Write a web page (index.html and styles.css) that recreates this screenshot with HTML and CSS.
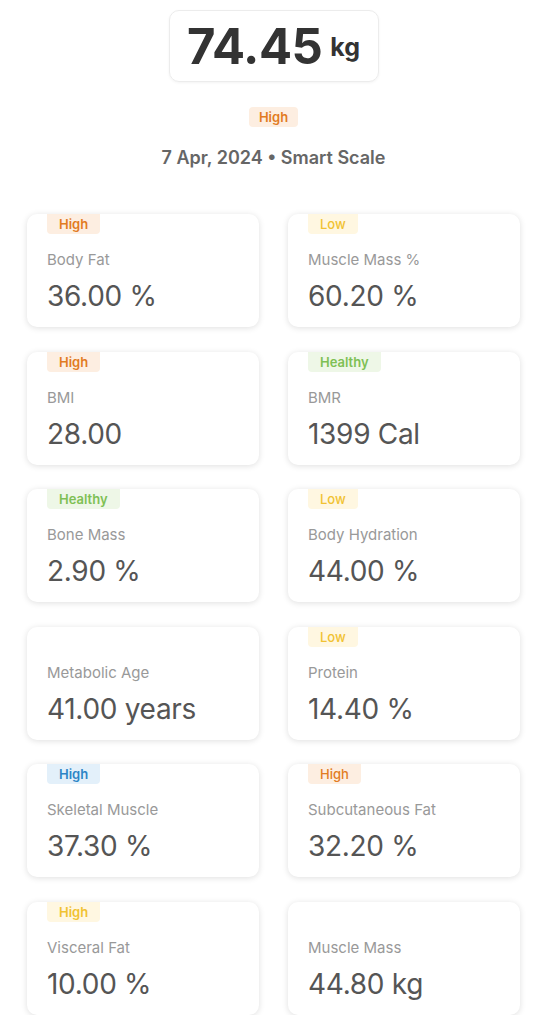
FILE: index.html
```html
<!DOCTYPE html>
<html>
<head>
    <title>Weight Details</title>
    <link rel="stylesheet" href="styles.css">
</head>
<body>
    <div class="summary">
        <div class="weight-box">
            <span class="weight">74.45</span>
            <span class="unit">kg</span>
        </div>
        <span class="tag orange">High</span>
        <div class="meta">7 Apr, 2024 &bull; Smart Scale</div>
    </div>

    <div class="grid">
        <div class="card">
            <span class="tag orange">High</span>
            <div class="label">Body Fat</div>
            <div class="value">36.00 %</div>
        </div>
        <div class="card">
            <span class="tag yellow light">Low</span>
            <div class="label">Muscle Mass %</div>
            <div class="value">60.20 %</div>
        </div>
        <div class="card">
            <span class="tag orange">High</span>
            <div class="label">BMI</div>
            <div class="value">28.00</div>
        </div>
        <div class="card">
            <span class="tag green">Healthy</span>
            <div class="label">BMR</div>
            <div class="value">1399 Cal</div>
        </div>
        <div class="card">
            <span class="tag green">Healthy</span>
            <div class="label">Bone Mass</div>
            <div class="value">2.90 %</div>
        </div>
        <div class="card">
            <span class="tag yellow light">Low</span>
            <div class="label">Body Hydration</div>
            <div class="value">44.00 %</div>
        </div>
        <div class="card">
            <span class="tag empty"></span>
            <div class="label">Metabolic Age</div>
            <div class="value">41.00 years</div>
        </div>
        <div class="card">
            <span class="tag yellow light">Low</span>
            <div class="label">Protein</div>
            <div class="value">14.40 %</div>
        </div>
        <div class="card">
            <span class="tag blue">High</span>
            <div class="label">Skeletal Muscle</div>
            <div class="value">37.30 %</div>
        </div>
        <div class="card">
            <span class="tag orange light">High</span>
            <div class="label">Subcutaneous Fat</div>
            <div class="value">32.20 %</div>
        </div>
        <div class="card">
            <span class="tag yellow">High</span>
            <div class="label">Visceral Fat</div>
            <div class="value">10.00 %</div>
        </div>
        <div class="card">
            <span class="tag empty"></span>
            <div class="label">Muscle Mass</div>
            <div class="value">44.80 kg</div>
        </div>
    </div>
</body>
</html>
```

FILE: styles.css
```css
body {
    font-family: Inter, "Noto Sans", sans-serif;
    margin: 0;
    padding: 10px 0 0;
    background-color: #fff;
    color: #555;
}

.summary {
    display: flex;
    flex-direction: column;
    align-items: center;
}

.weight-box {
    width: 210px;
    height: 72px;
    box-sizing: border-box;
    display: flex;
    align-items: center;
    justify-content: center;
    gap: 8px;
    border: 1px solid #ececec;
    border-radius: 10px;
    box-shadow: 0 1px 3px rgba(0, 0, 0, 0.05);
    color: #333;
    font-weight: 700;
}

.weight {
    font-size: 49px;
    letter-spacing: -0.5px;
}

.unit {
    font-size: 25px;
    margin-top: 2px;
}

.summary .tag {
    margin-top: 25px;
    border-radius: 4px;
    padding: 0 10px;
}

.meta {
    margin-top: 20px;
    font-size: 18px;
    font-weight: 600;
    color: #666;
}

.grid {
    display: grid;
    grid-template-columns: 1fr 1fr;
    column-gap: 29px;
    row-gap: 24.6px;
    padding: 0 27px;
    margin-top: 46px;
}

.card {
    display: flex;
    flex-direction: column;
    align-items: flex-start;
    padding: 0 20px 14px;
    border-radius: 10px;
    background-color: #fff;
    box-shadow: 0 1px 6px rgba(0, 0, 0, 0.13);
}

.tag {
    height: 20px;
    line-height: 20px;
    padding: 0 12px;
    font-size: 13px;
    font-weight: 600;
    border-radius: 0 0 4px 4px;
}

.tag.light {
    font-weight: 500;
}

.tag.empty {
    padding: 0;
}

.orange {
    background-color: #fdeee1;
    color: #e27b22;
}

.yellow {
    background-color: #fff7e1;
    color: #f1c232;
}

.green {
    background-color: #eef7e7;
    color: #7ec054;
}

.blue {
    background-color: #e3f0fa;
    color: #2d85c6;
}

.label {
    margin-top: 16px;
    font-size: 15px;
    line-height: 20px;
    color: #999;
}

.value {
    margin-top: 9px;
    font-size: 28px;
    line-height: 34px;
    color: #555;
    letter-spacing: -0.3px;
}
```
